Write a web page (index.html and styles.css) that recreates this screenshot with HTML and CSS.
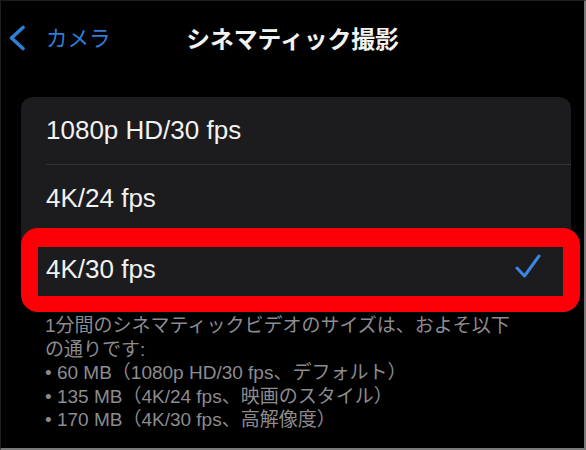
FILE: index.html
```html
<!DOCTYPE html>
<html lang="ja">
<head>
<meta charset="utf-8">
<link rel="stylesheet" href="styles.css">
</head>
<body>
<div class="screen">
  <header class="nav">
    <div class="back">
      <svg class="chev" width="18" height="26" viewBox="0 0 18 26"><path d="M15 2.5 L3.5 13 L15 23.5" fill="none" stroke="#2f7ed8" stroke-width="3.6" stroke-linecap="round" stroke-linejoin="round"/></svg>
      <span class="back-label">カメラ</span>
    </div>
    <h1 class="title">シネマティック撮影</h1>
    <div></div>
  </header>

  <section class="card">
    <div class="row"><div class="row-inner">1080p HD/30 fps</div></div>
    <div class="row"><div class="row-inner">4K/24 fps</div></div>
    <div class="row"><div class="row-inner last">4K/30 fps
      <svg class="check" width="28" height="28" viewBox="0 0 28 28"><path d="M3 15 L10.5 23 L25 3" fill="none" stroke="#3a86e0" stroke-width="3" stroke-linecap="round" stroke-linejoin="round"/></svg>
    </div></div>
  </section>

  <div class="highlight"></div>

  <p class="footer">1分間のシネマティックビデオのサイズは、およそ以下<br>の通りです:<br>• 60 MB（1080p HD/30 fps、デフォルト）<br>• 135 MB（4K/24 fps、映画のスタイル）<br>• 170 MB（4K/30 fps、高解像度）</p>
</div>
</body>
</html>
```

FILE: styles.css
```css
html, body {
  margin: 0;
  padding: 0;
  background: #000;
}
.screen {
  position: relative;
  width: 586px;
  height: 450px;
  box-sizing: border-box;
  background: #000;
  border-top: 1px solid #1e1e1e;
  border-left: 1px solid #1e1e1e;
  border-right: 2px solid #7a7a7a;
  border-bottom: 2px solid #7a7a7a;
  overflow: hidden;
  font-family: "Liberation Sans", "Noto Sans CJK JP", sans-serif;
}
.nav {
  display: grid;
  grid-template-columns: 1fr auto 1fr;
  align-items: center;
  height: 73px;
}
.back {
  display: flex;
  align-items: center;
  gap: 20px;
  padding-left: 7px;
}
.chev { display: block; }
.back-label {
  font-family: "Noto Sans CJK JP", sans-serif;
  font-size: 21.5px;
  color: #2f7ed8;
  line-height: 1;
  position: relative;
  top: -1px;
}
.title {
  margin: 0;
  font-family: "Noto Sans CJK JP", sans-serif;
  font-weight: 700;
  font-size: 23.8px;
  color: #f2f2f2;
  line-height: 1;
}
.card {
  margin: 23px 0 0 20px;
  width: 550px;
  background: #1c1c1e;
  border-radius: 12px;
  overflow: hidden;
}
.row {
  padding-left: 25px;
}
.row-inner {
  height: 67px;
  display: flex;
  align-items: center;
  justify-content: space-between;
  padding-right: 29px;
  border-bottom: 1px solid #333335;
  font-size: 26px;
  color: #f2f2f2;
}
.row-inner.last {
  border-bottom: none;
  height: 68px;
  padding-top: 4px;
  box-sizing: border-box;
}
.check { display: block; margin-top: -4px; }
.highlight {
  position: absolute;
  left: 20px;
  top: 227px;
  width: 559px;
  height: 84px;
  box-sizing: border-box;
  border: 17px solid #fc0008;
  border-top-width: 19px;
  border-bottom-width: 16px;
  border-radius: 17px;
}
.footer {
  margin: 13px 0 0 0;
  padding-left: 44px;
  font-family: "Liberation Sans", "Noto Sans CJK JP", sans-serif;
  font-size: 19px;
  line-height: 23.5px;
  color: #8c8c91;
}
```
